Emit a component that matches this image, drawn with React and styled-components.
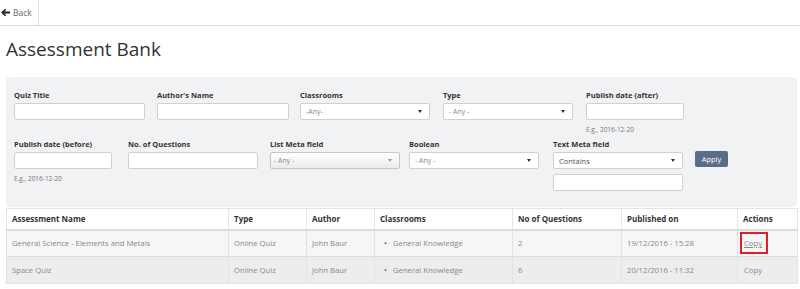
import React from 'react'
import styled, { createGlobalStyle } from 'styled-components'

const Global = createGlobalStyle`
  body {
    margin: 0;
    font-family: "Open Sans", "Liberation Sans", sans-serif;
    background: #fff;
  }
`

const TopBar = styled.div`
  display: flex;
  height: 25px;
  border-bottom: 1px solid #dcdcdc;
`

const BackButton = styled.a`
  display: flex;
  align-items: center;
  gap: 3px;
  padding: 0 6px 0 1px;
  border-right: 1px solid #dcdcdc;
  font-size: 8.5px;
  color: #666;
  text-decoration: none;
  cursor: pointer;
`

const Page = styled.div`
  padding: 0 3px 0 6px;
`

const Title = styled.h1`
  margin: 10px 0 15px 0;
  font-size: 19px;
  line-height: 26px;
  font-weight: 400;
  color: #333;
`

const FilterPanel = styled.div`
  background: #f1f2f4;
  border-radius: 4px;
  padding: 13px 8px 16px 8px;
`

const FilterRow = styled.div`
  display: flex;
  align-items: flex-start;
  margin-bottom: ${p => p.$mb || 0}px;
`

const Field = styled.div`
  width: ${p => p.$w}px;
  margin-right: ${p => p.$mr || 0}px;
  display: flex;
  flex-direction: column;
`

const Label = styled.label`
  font-size: 7.5px;
  line-height: 10px;
  font-weight: 700;
  color: #333;
  margin-bottom: 3px;
  white-space: nowrap;
`

const Input = styled.div`
  height: 17px;
  box-sizing: border-box;
  border: 1px solid #cfd0d2;
  border-radius: 2px;
  background: #fff;
`

const Select = styled.div`
  height: 17px;
  box-sizing: border-box;
  border: 1px solid ${p => (p.$muted ? '#c5c6c8' : '#cfd0d2')};
  border-radius: 2px;
  background: ${p => (p.$muted ? 'linear-gradient(#ffffff, #ececec)' : '#fff')};
  display: flex;
  align-items: center;
  justify-content: space-between;
  padding: 0 7px 0 ${p => (p.$muted ? 3 : 5)}px;
  font-size: ${p => (p.$dark ? 7.5 : 7)}px;
  color: ${p => (p.$dark ? '#555' : '#888')};
  margin-bottom: 5px;

  &::after {
    content: '';
    border-left: 2px solid transparent;
    border-right: 2px solid transparent;
    border-top: 3px solid ${p => (p.$muted ? '#999' : '#333')};
  }
`

const Hint = styled.div`
  font-size: 6.5px;
  line-height: 8px;
  color: #777;
  margin-top: 6px;
  white-space: nowrap;
`

const ApplyButton = styled.button`
  margin-top: 12px;
  width: 33px;
  height: 16px;
  padding: 0;
  border: 0;
  border-radius: 2px;
  background: #5b6b8a;
  color: #fff;
  font-family: inherit;
  font-size: 7.5px;
  cursor: pointer;
`

const Table = styled.table`
  margin-top: 1px;
  width: 100%;
  table-layout: fixed;
  border-collapse: collapse;
  border: 1px solid #e4e4e4;
`

const Th = styled.th`
  width: ${p => p.$w}px;
  height: 21px;
  padding: 0 5px;
  text-align: left;
  font-size: 8px;
  font-weight: 700;
  color: #333;
  background: #fff;
  border-left: 1px solid #e6e6e6;
  border-bottom: 2px solid #dcdcdc;
  box-sizing: border-box;
`

const Tr = styled.tr`
  background: ${p => (p.$alt ? '#ededed' : '#f6f6f6')};
`

const Td = styled.td`
  height: 27px;
  box-sizing: border-box;
  padding: 0 5px 0 ${p => p.$pl || 5}px;
  font-size: 7.7px;
  color: #888;
  border-left: 1px solid #e2e2e2;
  border-top: 1px solid #dcdcdc;
  white-space: nowrap;
`

const Classes = styled.ul`
  margin: 0;
  padding: 0;
  list-style: none;
`

const ClassItem = styled.li`
  padding-left: 4px;
  &::before {
    content: '•';
    display: inline-block;
    width: 9px;
    color: #555;
  }
`

const CopyLink = styled.a`
  display: inline-block;
  color: #888;
  line-height: 10px;
  cursor: pointer;
  text-decoration: ${p => (p.$active ? 'underline' : 'none')};
  ${p =>
    p.$active &&
    `
    padding: 4px 4px 4px 2px;
    margin-left: -4px;
    border: 2px solid #d8232a;
  `}
`

const ArrowLeft = () => (
  <svg width="9" height="9" viewBox="0 0 10 10">
    <path d="M0 5 L4.6 0.7 L5.9 2 L3.8 4 H10 V6 H3.8 L5.9 8 L4.6 9.3 Z" fill="#222" />
  </svg>
)

const rows = [
  { name: 'General Science - Elements and Metals', type: 'Online Quiz', author: 'John Baur', classroom: 'General Knowledge', questions: 2, published: '19/12/2016 - 15:28' },
  { name: 'Space Quiz', type: 'Online Quiz', author: 'John Baur', classroom: 'General Knowledge', questions: 6, published: '20/12/2016 - 11:32' },
]

export default function App() {
  return (
    <>
      <Global />
      <TopBar>
        <BackButton>
          <ArrowLeft />
          Back
        </BackButton>
      </TopBar>
      <Page>
        <Title>Assessment Bank</Title>
        <FilterPanel>
          <FilterRow $mb={5}>
            <Field $w={131} $mr={12}>
              <Label>Quiz Title</Label>
              <Input />
            </Field>
            <Field $w={132} $mr={11}>
              <Label>Author's Name</Label>
              <Input />
            </Field>
            <Field $w={130} $mr={13}>
              <Label>Classrooms</Label>
              <Select>-Any-</Select>
            </Field>
            <Field $w={130} $mr={13}>
              <Label>Type</Label>
              <Select>- Any -</Select>
            </Field>
            <Field $w={98}>
              <Label>Publish date (after)</Label>
              <Input />
              <Hint>E.g., 2016-12-20</Hint>
            </Field>
          </FilterRow>
          <FilterRow>
            <Field $w={98} $mr={16}>
              <Label>Publish date (before)</Label>
              <Input />
              <Hint>E.g., 2016-12-20</Hint>
            </Field>
            <Field $w={130} $mr={12}>
              <Label>No. of Questions</Label>
              <Input />
            </Field>
            <Field $w={130} $mr={9}>
              <Label>List Meta field</Label>
              <Select $muted>- Any -</Select>
            </Field>
            <Field $w={130} $mr={14}>
              <Label>Boolean</Label>
              <Select>- Any -</Select>
            </Field>
            <Field $w={130} $mr={12}>
              <Label>Text Meta field</Label>
              <Select $dark>Contains</Select>
              <Input />
            </Field>
            <ApplyButton>Apply</ApplyButton>
          </FilterRow>
        </FilterPanel>
        <Table>
          <thead>
            <tr>
              <Th $w={222}>Assessment Name</Th>
              <Th $w={78}>Type</Th>
              <Th $w={68}>Author</Th>
              <Th $w={138}>Classrooms</Th>
              <Th $w={109}>No of Questions</Th>
              <Th $w={116}>Published on</Th>
              <Th $w={60}>Actions</Th>
            </tr>
          </thead>
          <tbody>
            {rows.map((r, i) => (
              <Tr key={r.name} $alt={i % 2 === 1}>
                <Td>{r.name}</Td>
                <Td>{r.type}</Td>
                <Td>{r.author}</Td>
                <Td>
                  <Classes>
                    <ClassItem>{r.classroom}</ClassItem>
                  </Classes>
                </Td>
                <Td>{r.questions}</Td>
                <Td>{r.published}</Td>
                <Td $pl={6}>
                  <CopyLink $active={i === 0}>Copy</CopyLink>
                </Td>
              </Tr>
            ))}
          </tbody>
        </Table>
      </Page>
    </>
  )
}
